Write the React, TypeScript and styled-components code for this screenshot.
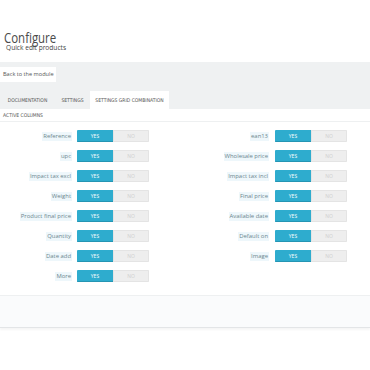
import React from "react";
import styled, { createGlobalStyle } from "styled-components";

const Global = createGlobalStyle`
  html, body { margin: 0; padding: 0; background: #ffffff; }
  body { font-family: "Open Sans", "DejaVu Sans", sans-serif; color: #555; }
  * { box-sizing: border-box; }
`;

const Page = styled.div`
  width: 370px;
  min-height: 370px;
  background: #fff;
`;

const Header = styled.div`
  padding: 30px 0 0 4px;
  height: 62px;
`;

const Title = styled.div`
  font-size: 14.5px;
  line-height: 16px;
  font-weight: 400;
  color: #4a4a4a;
  transform: scaleX(0.79);
  transform-origin: left center;
  white-space: nowrap;
`;

const Subtitle = styled.div`
  font-size: 6.6px;
  line-height: 8px;
  margin: -2px 0 0 2px;
  color: #444;
`;

const Band = styled.div`
  background: #eff1f2;
  padding-top: 5px;
`;

const BackButton = styled.div`
  display: block;
  background: #fff;
  height: 15px;
  width: 56px;
  line-height: 15px;
  font-size: 5.6px;
  padding-left: 3px;
  color: #555;
  white-space: nowrap;
`;

const Tabs = styled.div`
  display: flex;
  margin-top: 9px;
  height: 18px;
`;

const Tab = styled.div<{ $active?: boolean; $w: number }>`
  width: ${(p) => p.$w}px;
  height: 18px;
  line-height: 18px;
  text-align: center;
  font-family: "DejaVu Sans Condensed", "DejaVu Sans", sans-serif;
  font-stretch: condensed;
  font-size: 5px;
  color: #555;
  white-space: nowrap;
  background: ${(p) => (p.$active ? "#fff" : "transparent")};
`;

const Panel = styled.div`
  background: #fff;
  padding-top: 2px;
  height: 186px;
`;

const SectionHead = styled.div`
  font-family: "DejaVu Sans Condensed", "DejaVu Sans", sans-serif;
  font-stretch: condensed;
  font-size: 5px;
  color: #555;
  padding: 0 0 0 3px;
  height: 11px;
  line-height: 8px;
  border-bottom: 1px solid #eef0f1;
`;

const Columns = styled.div`
  display: flex;
  padding-top: 8px;
`;

const Column = styled.div<{ $width: number }>`
  width: ${(p) => p.$width}px;
  display: flex;
  flex-direction: column;
  gap: 8px;
`;

const Row = styled.div<{ $labelWidth: number; $gap: number }>`
  display: grid;
  grid-template-columns: ${(p) => p.$labelWidth}px 72px;
  column-gap: ${(p) => p.$gap}px;
  height: 12px;
  align-items: center;
`;

const Label = styled.div`
  justify-self: end;
  font-size: 5.9px;
  line-height: 9px;
  color: #6c868e;
  background: #eef7fb;
  padding: 0 1px;
  white-space: nowrap;
`;

const Toggle = styled.div`
  display: grid;
  grid-template-columns: 36px 36px;
  height: 12px;
  border-radius: 1px;
  overflow: hidden;
`;

const Option = styled.div<{ $on?: boolean }>`
  font-size: 5px;
  line-height: 12px;
  text-align: center;
  color: ${(p) => (p.$on ? "#fff" : "#cfcfcf")};
  background: ${(p) => (p.$on ? "#2eacce" : "#eeeeee")};
  box-shadow: ${(p) => (p.$on ? "inset 0 -1px 0 #2595b3" : "inset 0 0 0 1px #e4e4e4")};
`;

const Footer = styled.div`
  background: #fafbfc;
  height: 33px;
  border-top: 1px solid #eef0f1;
  border-bottom: 1px solid #e3e5e7;
  box-shadow: 0 2px 2px rgba(0, 0, 0, 0.04);
`;

const left = ["Reference", "upc", "Impact tax excl", "Weight", "Product final price", "Quantity", "Date add", "More"];
const right = ["ean13", "Wholesale price", "Impact tax incl", "Final price", "Available date", "Default on", "Image"];

const Switch = () => (
  <Toggle>
    <Option $on>YES</Option>
    <Option>NO</Option>
  </Toggle>
);

export default function App() {
  return (
    <Page>
      <Global />
      <Header>
        <Title>Configure</Title>
        <Subtitle>Quick edit products</Subtitle>
      </Header>
      <Band>
        <BackButton>Back to the module</BackButton>
        <Tabs>
          <Tab $w={55}>DOCUMENTATION</Tab>
          <Tab $w={35}>SETTINGS</Tab>
          <Tab $w={79} $active>SETTINGS GRID COMBINATION</Tab>
        </Tabs>
      </Band>
      <Panel>
        <SectionHead>ACTIVE COLUMNS</SectionHead>
        <Columns>
          <Column $width={185}>
            {left.map((l) => (
              <Row key={l} $labelWidth={72} $gap={5}>
                <Label>{l}</Label>
                <Switch />
              </Row>
            ))}
          </Column>
          <Column $width={185}>
            {right.map((l) => (
              <Row key={l} $labelWidth={84} $gap={6}>
                <Label>{l}</Label>
                <Switch />
              </Row>
            ))}
          </Column>
        </Columns>
      </Panel>
      <Footer />
    </Page>
  );
}
